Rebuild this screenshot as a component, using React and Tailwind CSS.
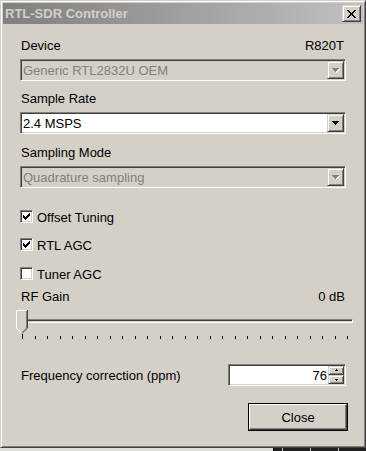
import React from "react";

const raised =
  "border border-t-[#d4d0c8] border-l-[#d4d0c8] border-r-[#404040] border-b-[#404040] shadow-[inset_1px_1px_0_#ffffff,inset_-1px_-1px_0_#808080] bg-[#d4d0c8]";
const sunken =
  "border border-t-[#808080] border-l-[#808080] border-r-[#ffffff] border-b-[#ffffff] shadow-[inset_1px_1px_0_#404040,inset_-1px_-1px_0_#d4d0c8]";

function Arrow({ disabled }) {
  return (
    <svg width="9" height="6" viewBox="0 0 9 6" shapeRendering="crispEdges">
      {disabled && <path d="M2 2h7v1H2zM3 3h5v1H3zM4 4h3v1H4zM5 5h1v1H5z" fill="#ffffff" />}
      <path
        d="M1 1h7v1H1zM2 2h5v1H2zM3 3h3v1H3zM4 4h1v1H4z"
        fill={disabled ? "#808080" : "#000000"}
      />
    </svg>
  );
}

function Combo({ text, disabled }) {
  return (
    <div className={`h-[22px] ${sunken} ${disabled ? "bg-[#d4d0c8]" : "bg-white"} p-[1px] flex items-stretch`}>
      <div className={`flex-1 flex items-center pl-[1px] ${disabled ? "text-[#808080]" : "text-black"}`}>
        {text}
      </div>
      <div className={`w-[17px] ${raised} flex items-center justify-center`}>
        <Arrow disabled={disabled} />
      </div>
    </div>
  );
}

function Check({ checked, label, className = "" }) {
  return (
    <div className={`flex items-start gap-[4px] h-[15px] ${className}`}>
      <div className={`w-[13px] h-[13px] ${sunken} bg-white flex items-center justify-center`}>
        {checked && (
          <svg width="7" height="7" viewBox="0 0 7 7" shapeRendering="crispEdges">
            <path
              d="M6 0h1v3H6zM5 1h1v3H5zM4 2h1v3H4zM3 3h1v3H3zM2 4h1v3H2zM1 3h1v3H1zM0 2h1v3H0z"
              fill="#000"
            />
          </svg>
        )}
      </div>
      <span>{label}</span>
    </div>
  );
}

export default function App() {
  const ticks = Array.from({ length: 27 });
  return (
    <div className="w-[366px] h-[451px] bg-[#d4d0c8] flex flex-col overflow-hidden font-['Liberation_Sans',Arial,sans-serif] text-[13px] leading-[15px] text-black">
      <div className="h-[448px] shrink-0 border border-t-[#d4d0c8] border-l-[#d4d0c8] border-r-[#404040] border-b-[#404040] shadow-[inset_1px_1px_0_#ffffff,inset_-1px_-1px_0_#808080] p-[2px] flex flex-col">
        {/* Title bar */}
        <div className="h-[21px] shrink-0 flex items-center justify-between bg-linear-to-r from-[#808080] to-[#c0c0c0] pl-[2px] pr-[2px]">
          <span className="font-bold text-[13px] leading-[15px] text-[#d4d0c8]">RTL-SDR Controller</span>
          <div className={`w-[19px] h-[17px] ${raised} flex items-center justify-center`}>
            <svg width="9" height="8" viewBox="0 0 9 8" shapeRendering="crispEdges">
              <path
                d="M0 0h2v1H0zM7 0h2v1H7zM1 1h2v1H1zM6 1h2v1H6zM2 2h2v1H2zM5 2h2v1H5zM3 3h3v1H3zM3 4h3v1H3zM2 5h2v1H2zM5 5h2v1H5zM1 6h2v1H1zM6 6h2v1H6zM0 7h2v1H0zM7 7h2v1H7z"
                fill="#000"
              />
            </svg>
          </div>
        </div>

        {/* Content */}
        <div className="flex flex-col px-[17px]">
          <div className="mt-[14px] flex justify-between pl-[1px] pr-[2px]">
            <span>Device</span>
            <span>R820T</span>
          </div>
          <div className="mt-[6px]">
            <Combo text="Generic RTL2832U OEM" disabled />
          </div>

          <div className="mt-[10px] pl-[1px]">Sample Rate</div>
          <div className="mt-[6px]">
            <Combo text="2.4 MSPS" />
          </div>

          <div className="mt-[11px] pl-[1px]">Sampling Mode</div>
          <div className="mt-[6px]">
            <Combo text="Quadrature sampling" disabled />
          </div>

          <Check className="mt-[22px]" checked label="Offset Tuning" />
          <Check className="mt-[13px]" checked label="RTL AGC" />
          <Check className="mt-[14px]" label="Tuner AGC" />

          <div className="mt-[7px] flex justify-between pl-[1px] pr-[1px]">
            <span>RF Gain</span>
            <span>0 dB</span>
          </div>

          {/* Slider */}
          <div className="mt-[6px] -ml-[4px] -mr-[7px] h-[29px] relative flex flex-col">
            <div className="mt-[9px] h-[4px] border-t border-t-[#808080] border-b border-b-white border-r border-r-white bg-[#404040] shadow-[inset_0_-1px_0_#d4d0c8]" />
            <div className="mt-[12px] h-[4px] pl-[6px] pr-[5px] flex justify-between items-end">
              {ticks.map((_, i) => (
                <div key={i} className={`w-[1px] bg-black ${i === 0 ? "h-[5px]" : "h-[3px]"}`} />
              ))}
            </div>
            <svg className="absolute left-0 top-0" width="12" height="24" viewBox="0 0 12 24">
              <polygon points="0,0 12,0 12,18 6,24 0,18" fill="#d4d0c8" />
              <g shapeRendering="crispEdges">
                <rect x="0" y="0" width="11" height="1" fill="#fff" />
                <rect x="0" y="0" width="1" height="18" fill="#fff" />
                <rect x="11" y="0" width="1" height="18" fill="#404040" />
                <rect x="10" y="1" width="1" height="17" fill="#808080" />
              </g>
              <line x1="0.5" y1="18" x2="6" y2="23.5" stroke="#fff" strokeWidth="1" />
              <line x1="11.5" y1="18" x2="6" y2="23.5" stroke="#404040" strokeWidth="1" />
              <line x1="10.5" y1="18" x2="6" y2="22.5" stroke="#808080" strokeWidth="1" />
            </svg>
          </div>

          {/* Frequency correction */}
          <div className="mt-[25px] flex items-center justify-between">
            <span className="pl-[1px]">Frequency correction (ppm)</span>
            <div className={`w-[118px] h-[22px] ${sunken} bg-white p-[1px] flex items-stretch`}>
              <div className="flex-1 flex items-center justify-end pr-[1px]">76</div>
              <div className="w-[16px] flex flex-col">
                <div className={`h-[9px] ${raised} flex items-center justify-center`}>
                  <svg width="5" height="3" viewBox="0 0 5 3" shapeRendering="crispEdges">
                    <path d="M2 0h1v1H2zM1 1h3v1H1z" fill="#000" />
                  </svg>
                </div>
                <div className={`h-[9px] ${raised} flex items-center justify-center`}>
                  <svg width="5" height="3" viewBox="0 0 5 3" shapeRendering="crispEdges">
                    <path d="M1 1h3v1H1zM2 2h1v1H2z" fill="#000" />
                  </svg>
                </div>
              </div>
            </div>
          </div>

          {/* Close button */}
          <div className="mt-[17px] flex justify-end -mr-[2px]">
            <div className="w-[100px] h-[28px] border border-black">
              <div className="w-full h-full border border-t-white border-l-white border-r-[#404040] border-b-[#404040] shadow-[inset_-1px_-1px_0_#808080] bg-[#d4d0c8] flex items-center justify-center">
                Close
              </div>
            </div>
          </div>
        </div>
      </div>
      <div className="h-[3px] flex">
        <div className="w-[273px] bg-[#e0ded8]" />
        <div className="w-[1px] bg-black" />
        <div className="w-[8px] bg-[#202020]" />
        <div className="w-[1px] bg-[#c0c0c0]" />
        <div className="w-[27px] bg-[#202020]" />
        <div className="w-[1px] bg-[#c0c0c0]" />
        <div className="w-[27px] bg-[#202020]" />
        <div className="w-[1px] bg-[#c0c0c0]" />
        <div className="flex-1 bg-[#202020]" />
      </div>
    </div>
  );
}
